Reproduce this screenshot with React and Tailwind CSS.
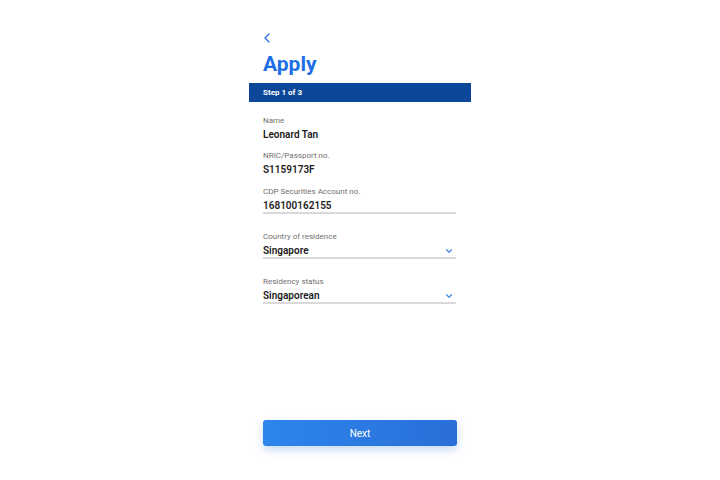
import { FiChevronLeft, FiChevronDown } from "react-icons/fi";

const Field = ({ label, value, underline, select }) => (
  <div>
    <div className="text-[8px] leading-[10px] text-[#707070]">{label}</div>
    <div
      className={`mt-[2px] flex items-center justify-between ${
        underline ? "border-b-2 border-[#d9d9d9]" : "pb-[1px]"
      }`}
    >
      <span className="text-[10px] leading-[13px] font-semibold text-[#222]">{value}</span>
      {select && (
        <FiChevronDown className="mr-[2px] text-[#4a8ee6]" size={10} strokeWidth={3} />
      )}
    </div>
  </div>
);

const App = () => {
  return (
    <div
      className="min-h-screen w-full bg-white flex justify-center"
      style={{ fontFamily: "Roboto, 'Noto Sans', sans-serif" }}
    >
      <div className="w-[222px] h-[480px] flex flex-col">
        {/* HEADER */}
        <div className="px-[14px] pt-[30px]">
          <FiChevronLeft className="-ml-[4px] text-[#2a6fe0]" size={16} />
          <h1 className="mt-[5px] text-[21px] leading-[26px] font-bold text-[#1c6ee6]">Apply</h1>
        </div>

        {/* STEP BAR */}
        <div className="mt-[6px] h-[19px] bg-[#0d4799] px-[14px] flex items-center">
          <span className="text-[8px] font-bold text-white">Step 1 of 3</span>
        </div>

        {/* FORM */}
        <div className="px-[14px] pr-[15px] pt-[14px] flex flex-col">
          <Field label="Name" value="Leonard Tan" />
          <div className="mt-[9px]">
            <Field label="NRIC/Passport no." value="S1159173F" />
          </div>
          <div className="mt-[10px]">
            <Field label="CDP Securities Account no." value="168100162155" underline />
          </div>
          <div className="mt-[18px]">
            <Field label="Country of residence" value="Singapore" underline select />
          </div>
          <div className="mt-[18px]">
            <Field label="Residency status" value="Singaporean" underline select />
          </div>
        </div>

        {/* BUTTON */}
        <div className="mt-auto mb-[34px] px-[14px]">
          <button className="w-full h-[26px] rounded-[3px] bg-gradient-to-r from-[#2c86ec] to-[#2a6ed8] text-white text-[10px] font-normal shadow-[0_4px_8px_rgba(40,110,220,0.25)]">
            Next
          </button>
        </div>
      </div>
    </div>
  );
};

export default App;
